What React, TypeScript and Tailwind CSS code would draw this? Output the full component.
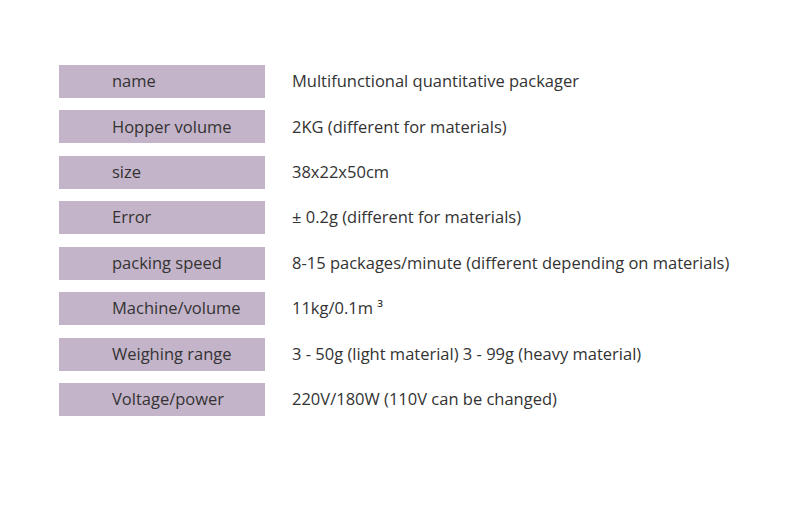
const rows: [string, string][] = [
  ["name", "Multifunctional quantitative packager"],
  ["Hopper volume", "2KG (different for materials)"],
  ["size", "38x22x50cm"],
  ["Error", "± 0.2g (different for materials)"],
  ["packing speed", "8-15 packages/minute (different depending on materials)"],
  ["Machine/volume", "11kg/0.1m ³"],
  ["Weighing range", "3 - 50g (light material) 3 - 99g (heavy material)"],
  ["Voltage/power", "220V/180W (110V can be changed)"],
];

export default function App() {
  return (
    <div
      className="w-[790px] h-[524px] bg-white pt-[65px] pl-[59px] text-[#333333]"
      style={{ fontFamily: '"Open Sans", "Noto Sans", sans-serif' }}
    >
      <div className="flex flex-col gap-[12.43px]">
        {rows.map(([k, v]) => (
          <div key={k} className="flex items-center h-[33px]">
            <div className="w-[206px] h-[33px] bg-[#c4b4c9] flex items-center pl-[53px] text-[16.5px]">
              {k}
            </div>
            <div className="pl-[27px] text-[16.5px]">{v}</div>
          </div>
        ))}
      </div>
    </div>
  );
}
